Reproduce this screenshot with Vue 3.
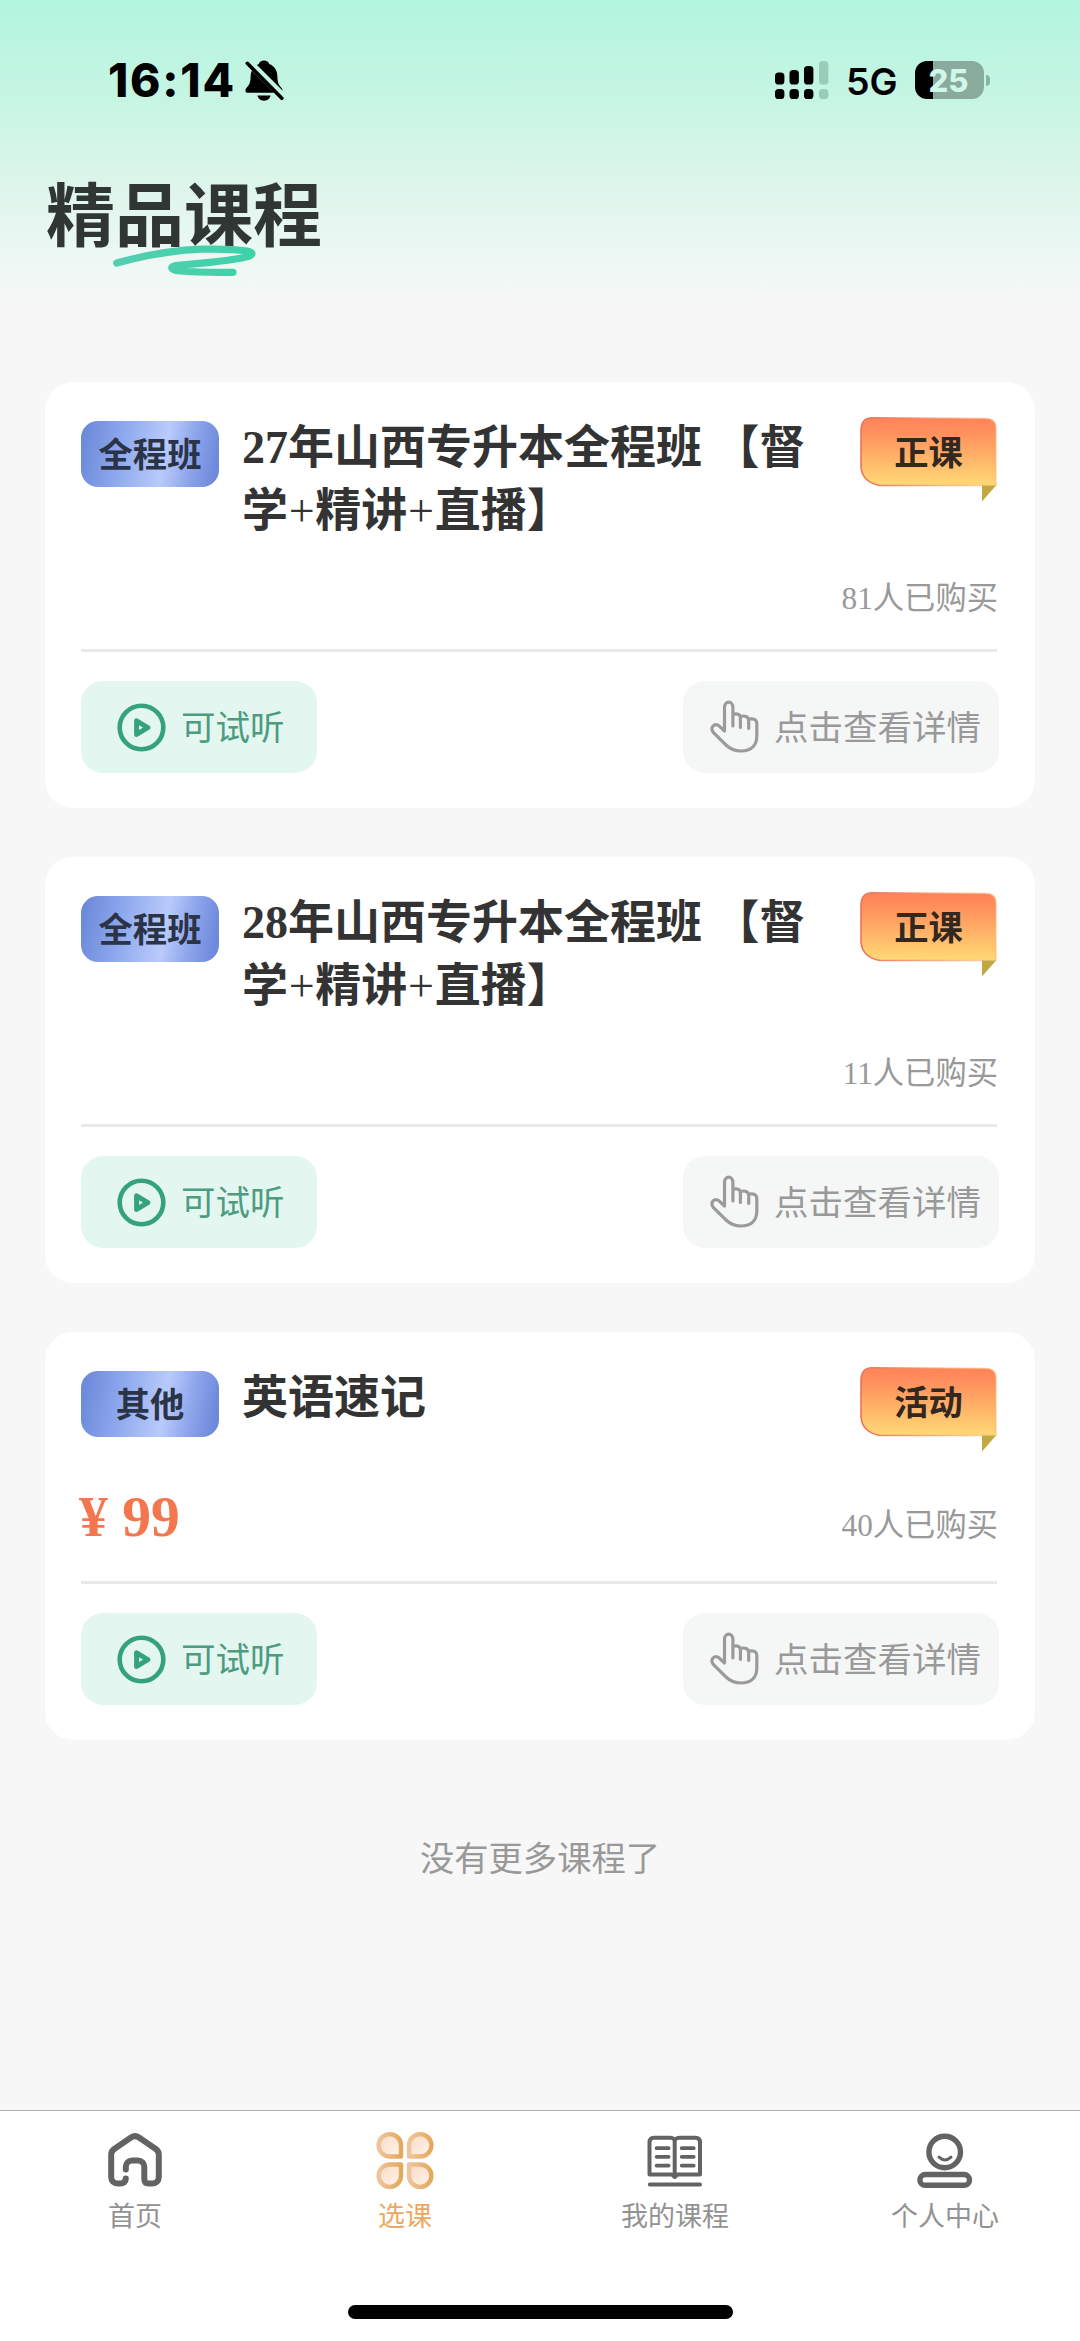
<script setup>
const courses = [
  { id: 1, kind: '全程班', title: ['27年山西专升本全程班 【督', '学', '+', '精讲', '+', '直播】'], label: '正课', price: '', sold: 81 },
  { id: 2, kind: '全程班', title: ['28年山西专升本全程班 【督', '学', '+', '精讲', '+', '直播】'], label: '正课', price: '', sold: 11 },
  { id: 3, kind: '其他', title: ['英语速记'], label: '活动', price: '99', sold: 40 },
]

const signal = [
  { x: 0, y: 11.5, on: true },
  { x: 14.5, y: 9, on: true },
  { x: 29, y: 5, on: true },
  { x: 44, y: 0, on: false },
]
</script>

<template>
  <div class="page">
    <header class="status">
      <div class="status-left">
        <span class="time">16:14</span>
        <svg class="bell" width="40" height="42" viewBox="0 0 40 42">
          <path d="M19 0.6c2.700 0 4.600 1.400 5.200 3.400 5.300 2 8.200 6.600 8.200 12.500 0 6.300 1.500 8.500 4 11.200 1.800 1.900 1.700 5.100-1.400 5.100H3c-3.100 0-3.200-3.200-1.400-5.100 2.500-2.700 4-4.900 4-11.200 0-5.900 2.900-10.500 8.200-12.500.6-2 2.500-3.400 5.200-3.400z" fill="#000" />
          <path d="M12.500 35.500h13c-.6 3.200-3.200 5.200-6.500 5.200s-5.900-2-6.500-5.200z" fill="#000" />
          <path d="M1.500 0 40 38.300" stroke="#c2f4e0" stroke-width="7.600" />
          <path d="M2.300 3.300 36.800 38.300" stroke="#000" stroke-width="3.600" stroke-linecap="round" />
        </svg>
      </div>
      <div class="status-right">
        <svg class="signal" width="54" height="38" viewBox="0 0 54 38">
          <g v-for="bar in signal" :key="bar.x" :fill="bar.on ? '#000' : '#9acdb9'">
            <rect :x="bar.x" :y="bar.y" width="9.400" :height="23.500 - bar.y" rx="3.600" />
            <rect :x="bar.x" y="28" width="9.400" height="10" rx="3.600" />
          </g>
        </svg>
        <span class="network">5G</span>
        <div class="battery">25</div>
        <i class="battery-tip"></i>
      </div>
    </header>

    <div class="heading">
      <h1>精品课程</h1>
      <svg class="scribble" width="146" height="34" viewBox="0 0 146 34">
        <defs>
          <linearGradient id="scribbleInk" x1="0" x2="1" y1="0" y2="0">
            <stop offset="0" stop-color="#54cdb0" />
            <stop offset="1" stop-color="#3ed2a9" />
          </linearGradient>
        </defs>
        <path d="M4.700 19C34 11 60 6.200 90 5.200 105 4.800 122 5 134.700 7 143 8.500 141 12 131 13.700 121 15.500 110 17 98 18.300L66 21.300C57 22.300 58 26 68 27 84 28.500 104 28.500 121 28.300" fill="none" stroke="url(#scribbleInk)" stroke-width="7.200" stroke-linecap="round" stroke-linejoin="round" />
      </svg>
    </div>

    <main class="list">
      <article v-for="course in courses" :key="course.id" class="card">
        <div class="top">
          <span class="kind">{{ course.kind }}</span>
          <h2><span v-for="(part, i) in course.title" :key="i" :class="{ plus: part === '+' }">{{ part }}</span></h2>
          <div class="label">
            <svg class="label-shape" width="137" height="86" viewBox="0 0 137 86">
              <defs>
                <linearGradient :id="'ribbon' + course.id" x1="0" x2="0" y1="0" y2="1">
                  <stop offset="0" stop-color="#ff8259" />
                  <stop offset="0.2" stop-color="#ff8f5c" />
                  <stop offset="1" stop-color="#ffd975" />
                </linearGradient>
                <linearGradient :id="'edge' + course.id" x1="0" x2="1" y1="0" y2="0">
                  <stop offset="0" stop-color="#e8745a" />
                  <stop offset="1" stop-color="#ffb57a" stop-opacity="0.500" />
                </linearGradient>
              </defs>
              <path d="M12 0.800 126 1.500Q136 1.500 136 11V68.500H20Q2 65 1 50V14Q1 0.800 12 0.800z" :fill="`url(#ribbon${course.id})`" :stroke="`url(#edge${course.id})`" stroke-width="1.600" />
              <path d="M122 68.500h14L122 84.500z" fill="#c2a843" />
            </svg>
            <span>{{ course.label }}</span>
          </div>
        </div>
        <div class="meta" :class="{ priced: course.price }">
          <strong v-if="course.price" class="price">¥ {{ course.price }}</strong>
          <span class="sold">{{ course.sold }}人已购买</span>
        </div>
        <div class="actions">
          <button class="try">
            <svg width="49" height="49" viewBox="0 0 49 49" fill="none" stroke="#35a27f" stroke-linejoin="round">
              <circle cx="24.500" cy="24.500" r="21.800" stroke-width="4.600" />
              <path d="M19.600 17.800v13.600L30.800 24.600z" stroke-width="5" />
            </svg>
            <span>可试听</span>
          </button>
          <button class="detail">
            <svg width="50" height="54" viewBox="0 0 50 54" fill="none" stroke="#9b9b9b" stroke-width="3.200" stroke-linecap="round" stroke-linejoin="round">
              <path d="M14.500 31V7.500c0-7.200 8.400-7.200 8.400 0V26M22.900 14.500c3.600-1.300 7.500-.6 7.500 3.500V27.500M30.400 16.600c4.300-1.500 8.300 0 8.300 4V28.500M38.700 19.200c4.400-1.200 8.100.3 8.100 4.300V36C46.800 45.500 41 51 31 51 24 51 20.500 49.300 16 45L3.500 32.700C-.5 27.500 4.500 22.500 9 25.800L14.500 31" />
            </svg>
            <span>点击查看详情</span>
          </button>
        </div>
      </article>
      <p class="end">没有更多课程了</p>
    </main>

    <nav class="tabs">
      <a class="tab">
        <svg width="60" height="60" viewBox="0 -1 60 60" fill="none" stroke="#636363" stroke-width="6" stroke-linecap="round" stroke-linejoin="round">
          <path d="M20.800 38.500V36c0-4 2.500-6.500 6.500-6.500h5.500c4 0 6.500 2.500 6.500 6.500V48c0 3 1.500 4.500 4.500 4.500h3.500c4 0 6.500-2.500 6.500-6.500V23.500c0-2.500-1-4-3-5.500L34 6.500Q30 3.800 26 6.500L9.200 18c-2 1.500-3 3-3 5.500V46c0 4 2.500 6.500 6.500 6.500h2.500c3.500 0 5.600-1.800 5.600-5" />
        </svg>
        <span>首页</span>
      </a>
      <a class="tab active">
        <svg width="60" height="60" viewBox="0 -0.500 60 60">
          <defs>
            <linearGradient id="petalEdge" x1="0" x2="1" y1="0" y2="0">
              <stop offset="0" stop-color="#f0c49b" />
              <stop offset="1" stop-color="#e3a95d" />
            </linearGradient>
            <linearGradient id="petalFill" x1="0" x2="0.900" y1="0" y2="0.900">
              <stop offset="0" stop-color="#f9d9c2" />
              <stop offset="1" stop-color="#fff3ea" />
            </linearGradient>
          </defs>
          <g fill="url(#petalFill)" stroke="url(#petalEdge)" stroke-width="4.400" stroke-linejoin="round">
            <path d="M26 26H14.800A11.200 11.200 0 1 1 26 14.800z" />
            <path d="M34 26V14.800A11.200 11.200 0 1 1 45.200 26z" />
            <path d="M26 34V45.200A11.200 11.200 0 1 1 14.800 34z" />
            <path d="M34 34H45.200A11.200 11.200 0 1 1 34 45.200z" />
          </g>
        </svg>
        <span>选课</span>
      </a>
      <a class="tab">
        <svg width="60" height="60" viewBox="0 -1 60 60" fill="none" stroke="#636363" stroke-width="4" stroke-linecap="round" stroke-linejoin="round">
          <path d="M29.700 9Q28 6.800 25 6.800H9Q4.500 6.800 4.500 11.500V43.500H27L29.700 46 32.500 43.500H55V11.500Q55 6.800 50.500 6.800H34.500Q31.500 6.800 29.700 9zV45M4.800 53.500H55" />
          <path d="M11.600 17.200h12M11.600 25.800h12M11.600 34.600h12M36.700 17.200h12M36.700 25.800h12M36.700 34.600h12" stroke-width="3.800" />
        </svg>
        <span>我的课程</span>
      </a>
      <a class="tab">
        <svg width="60" height="60" viewBox="0 -1 60 60" fill="none" stroke="#636363" stroke-linecap="round">
          <circle cx="29.700" cy="21" r="15.800" stroke-width="5.400" />
          <path d="M24 26.200q6 5.500 12 0" stroke-width="3" />
          <rect x="4.900" y="43.500" width="49.600" height="10.800" rx="5.400" stroke-width="5.400" />
        </svg>
        <span>个人中心</span>
      </a>
      <i class="home-bar"></i>
    </nav>
  </div>
</template>

<style>
body {
  background: #f7f7f7;
}
</style>

<style scoped>
.page {
  box-sizing: border-box;
  width: 1080px;
  height: 2341px;
  display: flex;
  flex-direction: column;
  overflow: hidden;
  background: linear-gradient(180deg, #b2f5df 0, #c9f5e4 110px, #dff5ec 190px, #eef8f5 265px, #f7f7f7 305px);
  font-family: "Liberation Serif", "Noto Sans CJK SC", serif;
}
.status {
  height: 160px;
  display: flex;
  justify-content: space-between;
  box-sizing: border-box;
  padding: 60px 90px 0 108px;
  font-family: Inter, sans-serif;
  color: #000;
}
.status-left,
.status-right {
  display: flex;
  align-items: center;
  height: 40px;
}
.time {
  font-size: 46px;
  font-weight: 800;
  letter-spacing: 1.800px;
  line-height: 40px;
  width: 137px;
}
.bell {
  margin-top: 2px;
}
.network {
  width: 68px;
  margin-left: 17px;
  font-size: 37.500px;
  font-weight: 600;
  line-height: 40px;
  padding-top: 3px;
}
.signal,
.network {
  position: relative;
  left: -1px;
}
.battery {
  width: 69px;
  height: 38px;
  border-radius: 12px;
  background: linear-gradient(90deg, #000 18px, #88ab9d 18px);
  color: #d0f8e9;
  font-size: 31px;
  font-weight: 800;
  line-height: 39px;
  text-align: center;
  text-indent: -2px;
}
.battery-tip {
  width: 4px;
  height: 11px;
  margin-left: 2px;
  border-radius: 0 4px 4px 0;
  background: #8ab5a4;
}
.heading {
  position: relative;
  height: 222px;
  padding-left: 46px;
}
h1 {
  margin: 0;
  padding-top: 8px;
  font-size: 69px;
  line-height: 100px;
  font-weight: 700;
  color: #303633;
}
.scribble {
  position: absolute;
  left: 112px;
  top: 84px;
}
.list {
  flex: 1;
  display: flex;
  flex-direction: column;
  gap: 49px;
  padding: 0 45px;
}
.card {
  padding: 0 38px 35px 36px;
  border-radius: 28px;
  background: #fff;
}
.top {
  display: flex;
  align-items: flex-start;
}
.kind {
  width: 138px;
  height: 66px;
  margin-top: 39px;
  border-radius: 17px;
  background: linear-gradient(100deg, #6c89da 3%, #8ba6ed 28%, #b9cbfb 60%, #92a9ed 76%, #6e88db 96%);
  color: #2b3347;
  font-size: 34.300px;
  font-weight: 700;
  line-height: 68px;
  text-align: center;
}
h2 {
  flex: 1;
  margin: 34px 0 0 23px;
  font-size: 46px;
  font-weight: 700;
  line-height: 63px;
  color: #333;
}
.plus {
  margin: 0 0.700px;
  font-weight: 400;
}
.label {
  position: relative;
  width: 137px;
  height: 86px;
  margin: 35px 0 0 31px;
  color: #33281f;
  font-size: 34.300px;
  font-weight: 700;
  line-height: 72px;
  text-align: center;
}
.label-shape {
  position: absolute;
  left: -0.500px;
  top: 0;
}
.label span {
  position: relative;
}
.meta {
  height: 110px;
  box-sizing: border-box;
  padding-top: 37px;
  display: flex;
  justify-content: flex-end;
  border-bottom: 3px solid #e9e9e9;
}
.meta.priced {
  height: 131px;
  padding-top: 53px;
  justify-content: space-between;
}
.price {
  margin: -14px 0 0 -2px;
  font-size: 57.600px;
  line-height: 50px;
  color: #f4764f;
}
.sold {
  margin-right: -1px;
  font-size: 31.300px;
  line-height: 40px;
  color: #999;
}
.actions {
  display: flex;
  justify-content: space-between;
  margin-top: 29px;
  margin-right: -2px;
}
button {
  display: flex;
  align-items: center;
  height: 92px;
  box-sizing: border-box;
  border: 0;
  border-radius: 22px;
  font-family: inherit;
  font-size: 34.500px;
}
button span {
  margin-top: -5px;
}
.try {
  width: 236px;
  padding: 0 0 0 36px;
  gap: 15px;
  background: #e3f6ef;
  color: #4b9c80;
}
.detail {
  width: 316px;
  padding: 0 0 0 27px;
  gap: 14px;
  background: #f5f6f6;
  color: #999;
}
.end {
  margin: 45px 0 0;
  text-align: center;
  font-size: 34.300px;
  line-height: 50px;
  color: #999;
}
.tabs {
  position: relative;
  height: 231px;
  box-sizing: border-box;
  padding-top: 19px;
  display: flex;
  border-top: 1px solid #b0b0b0;
  background: #fff;
}
.tab {
  flex: 1;
  display: flex;
  flex-direction: column;
  align-items: center;
  color: #929292;
  font-size: 27px;
  line-height: 40px;
}
.tab span {
  margin-top: 7px;
}
.tab.active {
  color: #eaa95f;
}
.home-bar {
  position: absolute;
  left: 348px;
  top: 194px;
  width: 385px;
  height: 14px;
  border-radius: 7px;
  background: #000;
}
</style>
